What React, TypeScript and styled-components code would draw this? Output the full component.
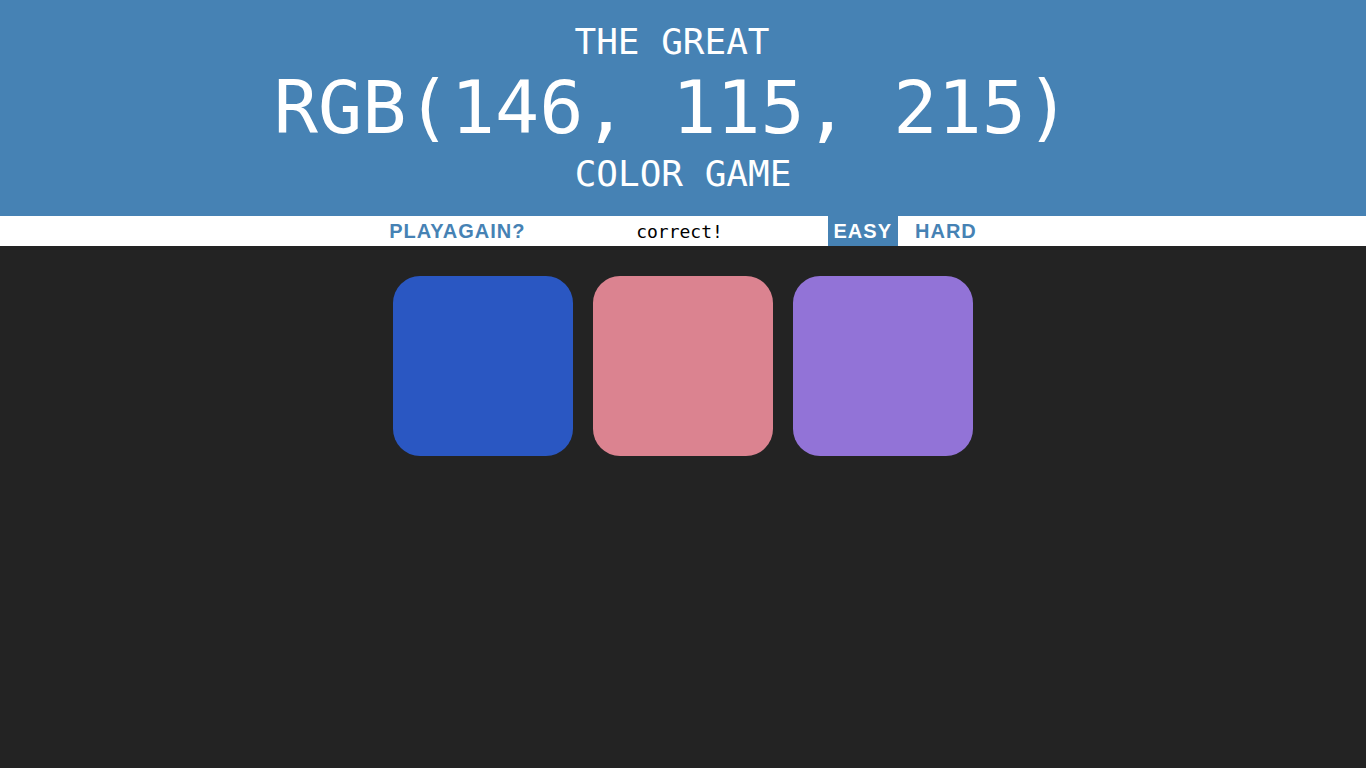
import React, { useState } from "react";
import styled, { createGlobalStyle } from "styled-components";

const GlobalStyle = createGlobalStyle`
  html, body {
    margin: 0;
    padding: 0;
    background: #232323;
  }
  body {
    font-family: "DejaVu Sans Mono", monospace;
  }
`;

const Header = styled.h1`
  margin: 0;
  padding: 22px 0;
  background: steelblue;
  color: #ffffff;
  text-align: center;
  text-transform: uppercase;
  font-weight: normal;
  font-family: "DejaVu Sans Mono", monospace;
`;

const Line = styled.span<{ $size: number; $lh: number; $trail?: number }>`
  display: block;
  font-size: ${(p) => p.$size}px;
  line-height: ${(p) => p.$lh}px;
  padding-right: ${(p) => p.$trail ?? 0}px;
`;

const Stripe = styled.div`
  height: 30px;
  background: #ffffff;
  display: flex;
  justify-content: center;
  align-items: stretch;
`;

const Button = styled.button<{ $active?: boolean; $gap?: number }>`
  border: none;
  outline: none;
  margin: 0 0 0 ${(p) => p.$gap ?? 0}px;
  padding: 0 6px;
  height: 100%;
  background: ${(p) => (p.$active ? "steelblue" : "transparent")};
  color: ${(p) => (p.$active ? "#ffffff" : "steelblue")};
  font-family: "Liberation Sans", Arial, sans-serif;
  font-weight: 700;
  font-size: 20px;
  letter-spacing: 1px;
  text-transform: uppercase;
  cursor: pointer;
`;

const Message = styled.span`
  width: 296px;
  display: flex;
  align-items: center;
  justify-content: center;
  font-family: "DejaVu Sans Mono", monospace;
  font-size: 18px;
  color: #000000;
`;

const Board = styled.div`
  max-width: 600px;
  margin: 20px auto;
  display: flex;
  flex-wrap: wrap;
`;

const Square = styled.div`
  width: 180px;
  height: 180px;
  margin: 10px;
  border-radius: 27px;
`;

const colors = ["rgb(42, 87, 194)", "rgb(219, 131, 144)", "rgb(146, 115, 215)"];

export default function App() {
  const [mode, setMode] = useState<"easy" | "hard">("easy");
  return (
    <>
      <GlobalStyle />
      <Header>
        <Line $size={36} $lh={40} $trail={22}>The Great</Line>
        <Line $size={73.5} $lh={92} $trail={22}>RGB(146, 115, 215)</Line>
        <Line $size={36} $lh={40}>Color Game</Line>
      </Header>
      <Stripe>
        <Button>PlayAgain?</Button>
        <Message>correct!</Message>
        <Button $active={mode === "easy"} onClick={() => setMode("easy")}>
          Easy
        </Button>
        <Button $active={mode === "hard"} $gap={11} onClick={() => setMode("hard")}>
          Hard
        </Button>
      </Stripe>
      <Board>
        {colors.map((c) => (
          <Square key={c} style={{ background: c }} />
        ))}
      </Board>
    </>
  );
}
